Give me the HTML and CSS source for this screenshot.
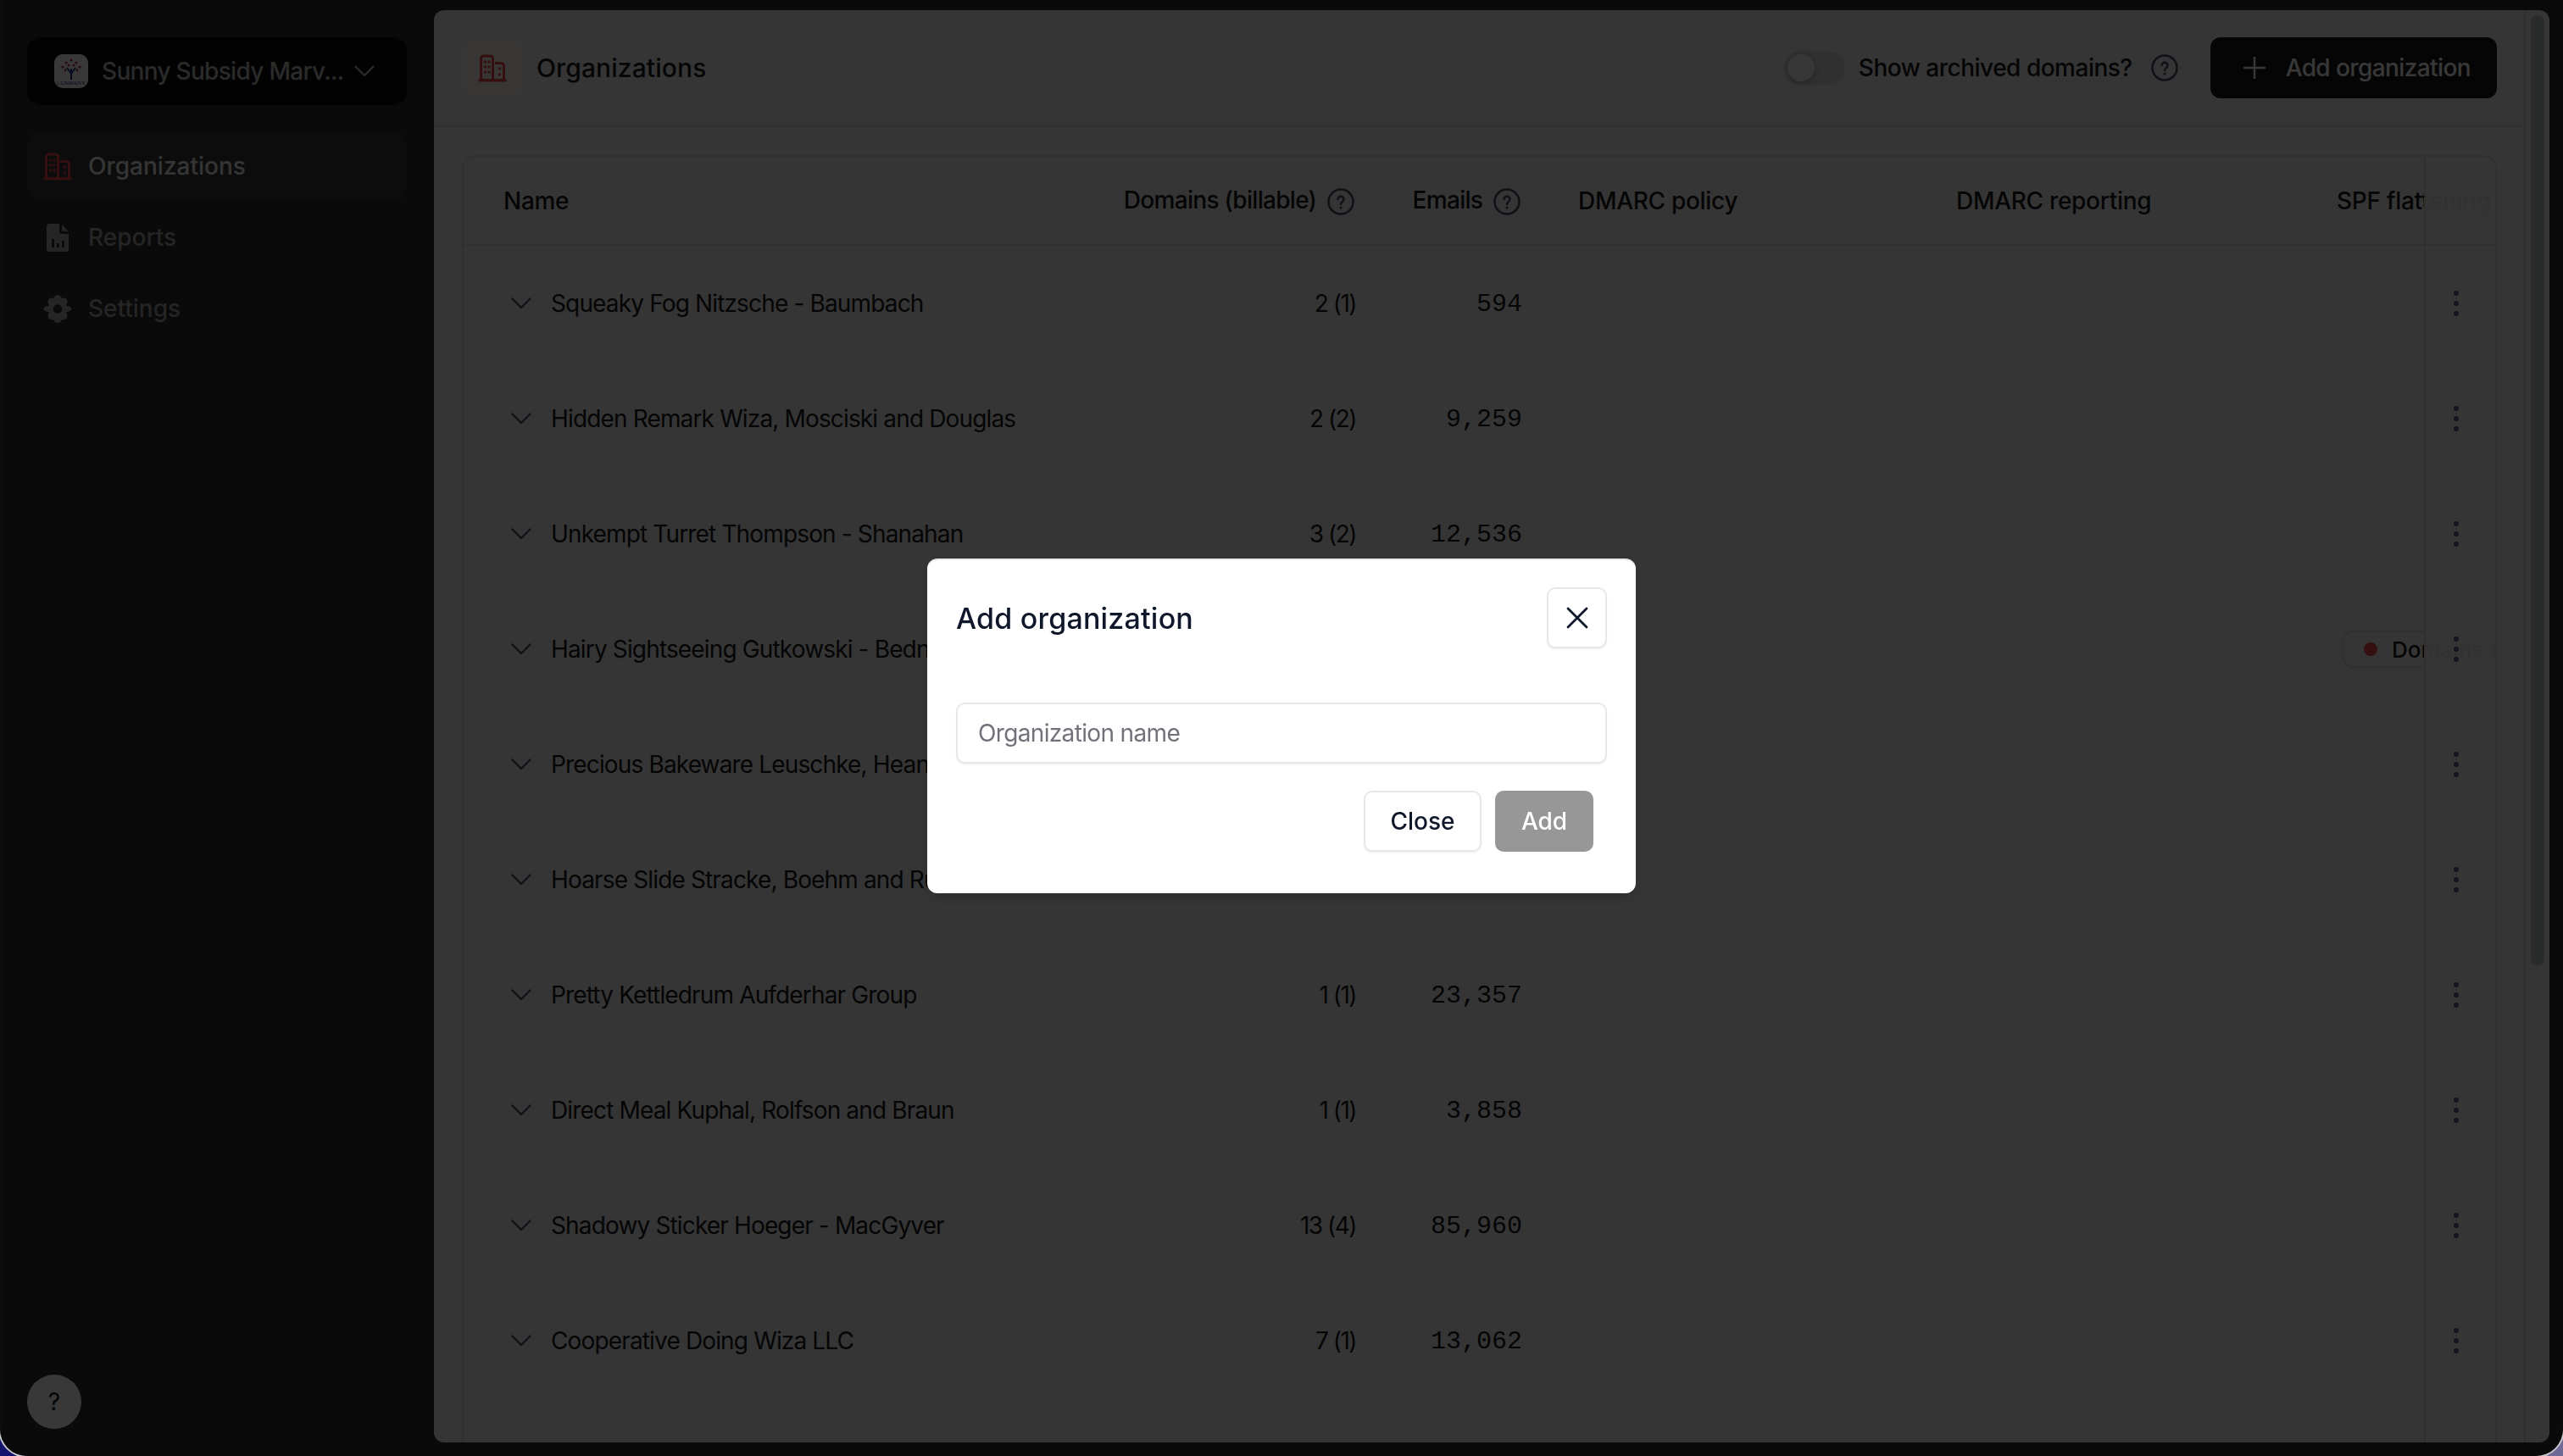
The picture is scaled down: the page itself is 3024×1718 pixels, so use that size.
FILE: index.html
```html
<!DOCTYPE html>
<html lang="en">
<head>
    <meta charset="UTF-8">
    <title>Organizations</title>
    <link rel="stylesheet" href="styles.css">
</head>
<body>
    <svg class="icon-defs" width="0" height="0">
        <symbol id="building" viewBox="0 0 34 32">
            <g fill="none" stroke="currentColor" stroke-width="3">
                <path d="M3.500 30V4.500a3 3 0 0 1 3-3h8a3 3 0 0 1 3 3V30"/>
                <path d="M20 10h7.500a3 3 0 0 1 3 3v17"/>
            </g>
            <path d="M2 30.300h30" stroke="currentColor" stroke-width="3.400" stroke-linecap="round"/>
            <g fill="currentColor">
                <rect x="7" y="7" width="3" height="3"/>
                <rect x="11.500" y="7" width="3" height="3"/>
                <rect x="7" y="13" width="3" height="3"/>
                <rect x="11.500" y="13" width="3" height="3"/>
                <rect x="7" y="19" width="3" height="3"/>
                <rect x="11.500" y="19" width="3" height="3"/>
                <rect x="24" y="15" width="3" height="3"/>
                <rect x="24" y="22" width="3" height="3"/>
            </g>
        </symbol>
        <symbol id="help" viewBox="0 0 32 32">
            <circle cx="16" cy="16" r="14.500" fill="none" stroke="currentColor" stroke-width="2.500"/>
            <path d="M12.500 13a3.500 3.500 0 1 1 5.500 3c-1.300.9-2 1.600-2 3" fill="none" stroke="currentColor" stroke-width="2.500" stroke-linecap="round"/>
            <circle cx="16" cy="23" r="1.500" fill="currentColor"/>
        </symbol>
        <symbol id="chevron" viewBox="0 0 24 14">
            <path d="M1.500 1.500 12 12 22.500 1.500" fill="none" stroke="currentColor" stroke-width="2.400" stroke-linecap="round" stroke-linejoin="round"/>
        </symbol>
        <symbol id="dots" viewBox="0 0 6 30">
            <circle cx="3" cy="3" r="3" fill="currentColor"/>
            <circle cx="3" cy="15" r="3" fill="currentColor"/>
            <circle cx="3" cy="27" r="3" fill="currentColor"/>
        </symbol>
    </svg>

    <div class="app">
        <aside class="sidebar">
            <button class="switcher">
                <span class="switcher-logo">
                    <svg width="40" height="40" viewBox="0 0 40 40">
                        <path d="M20 30V17M20 23l-5-7M20 23l5-7" stroke="#1f3a80" stroke-width="2" fill="none"/>
                        <g fill="#b3283a">
                            <circle cx="14" cy="10" r="1.600"/>
                            <circle cx="20" cy="7" r="1.600"/>
                            <circle cx="26" cy="10" r="1.600"/>
                            <circle cx="10" cy="15" r="1.600"/>
                            <circle cx="30" cy="15" r="1.600"/>
                            <circle cx="17" cy="13" r="1.400"/>
                            <circle cx="23" cy="13" r="1.400"/>
                            <circle cx="13" cy="19" r="1.400"/>
                            <circle cx="27" cy="19" r="1.400"/>
                        </g>
                        <text class="logo-text" x="20" y="36" text-anchor="middle">COMPANY</text>
                    </svg>
                </span>
                <span class="switcher-name">Sunny Subsidy Marv...</span>
                <svg class="switcher-chevron"><use href="#chevron"/></svg>
            </button>
            <nav class="nav">
                <a class="nav-item active">
                    <svg class="nav-icon red"><use href="#building"/></svg>
                    Organizations
                </a>
                <a class="nav-item">
                    <svg class="nav-icon" viewBox="-4 0 34 33">
                        <path fill="currentColor" fill-rule="evenodd" d="M4 0h11v9a3 3 0 0 0 3 3h8v18a3 3 0 0 1-3 3H3a3 3 0 0 1-3-3V4a4 4 0 0 1 4-4zM6 18h3v10H6zM12 23h3v5h-3zM18 20h3v8h-3z"/>
                        <path fill="currentColor" d="M18 1l8 8h-8z"/>
                    </svg>
                    Reports
                </a>
                <a class="nav-item">
                    <svg class="nav-icon" viewBox="0 0 34 34">
                        <path fill="currentColor" fill-rule="evenodd" d="M17 0c2.500 0 4.300 1.700 5 4.200 2.500-.8 5-.3 6.300 2 1.200 2.100.5 4.400-1.300 6.300 1.800.9 7 1.900 7 4.500s-5.200 3.600-7 4.500c1.800 1.900 2.500 4.200 1.300 6.300-1.300 2.300-3.800 2.800-6.300 2-.7 2.500-2.500 4.200-5 4.200s-4.300-1.700-5-4.200c-2.500.8-5 .3-6.300-2-1.200-2.100-.5-4.400 1.300-6.300C5.200 20.600 0 19.600 0 17s5.200-3.600 7-4.500C5.200 10.600 4.500 8.300 5.700 6.200c1.300-2.300 3.800-2.800 6.300-2C12.700 1.700 14.500 0 17 0zm0 11.500a5.500 5.500 0 1 0 0 11 5.500 5.500 0 0 0 0-11z"/>
                    </svg>
                    Settings
                </a>
            </nav>
            <button class="help-btn">?</button>
        </aside>

        <main class="main">
            <div class="content">
                <header class="page-header">
                    <span class="page-icon"><svg class="nav-icon red"><use href="#building"/></svg></span>
                    <h1>Organizations</h1>
                    <div class="header-actions">
                        <span class="toggle"><span class="toggle-knob"></span></span>
                        <span class="toggle-label">Show archived domains?</span>
                        <svg class="help-icon"><use href="#help"/></svg>
                        <button class="btn-primary">
                            <svg width="28" height="28" viewBox="0 0 28 28"><path d="M14 1v26M1 14h26" stroke="currentColor" stroke-width="2.400"/></svg>
                            Add organization
                        </button>
                    </div>
                </header>

                <div class="table-card">
                    <table class="org-table">
                        <thead>
                            <tr>
                                <th class="col-name">Name</th>
                                <th class="col-domains col-num">Domains (billable) <svg class="help-icon"><use href="#help"/></svg></th>
                                <th class="col-emails col-num">Emails <svg class="help-icon"><use href="#help"/></svg></th>
                                <th class="col-policy">DMARC policy</th>
                                <th class="col-report">DMARC reporting</th>
                                <th class="col-spf">SPF flattening</th>
                                <th class="col-menu sticky"></th>
                            </tr>
                        </thead>
                        <tbody id="rows"></tbody>
                    </table>
                </div>
            </div>
            <div class="scroll-track"><div class="scroll-thumb"></div></div>
        </main>
    </div>

    <div class="backdrop">
        <div class="modal">
            <div class="modal-head">
                <h2>Add organization</h2>
                <button class="modal-x">
                    <svg width="26" height="26" viewBox="0 0 26 26"><path d="M2 2l22 22M24 2 2 24" stroke="currentColor" stroke-width="2.800" stroke-linecap="round"/></svg>
                </button>
            </div>
            <input class="modal-input" type="text" placeholder="Organization name">
            <div class="modal-actions">
                <button class="btn-close">Close</button>
                <button class="btn-add">Add</button>
            </div>
        </div>
    </div>

    <script src="app.js"></script>
</body>
</html>
```

FILE: styles.css
```css
* {
    box-sizing: border-box;
}

body {
    margin: 0;
    height: 1718px;
    overflow: hidden;
    font-family: Inter, "Noto Sans", sans-serif;
    font-size: 28px;
    color: #18181b;
    background: linear-gradient(90deg, #14146e, #6f6a96);
}

button {
    font: inherit;
    cursor: pointer;
}

.icon-defs {
    position: absolute;
}

.app {
    display: flex;
    height: 1718px;
    background-color: #2d2d2d;
    border-radius: 0 0 32px 32px;
    border-left: 2px solid #3a3a3a;
    padding: 12px 16px 16px 0;
}

/* sidebar */
.sidebar {
    width: 510px;
    flex-shrink: 0;
    display: flex;
    flex-direction: column;
    padding: 32px 32px 16px 30px;
}

.switcher {
    display: flex;
    align-items: center;
    height: 80px;
    padding: 0 32px;
    border: none;
    border-radius: 16px;
    background-color: #0a0a0a;
    color: #c0c0c0;
    font-weight: 500;
}

.switcher-logo {
    width: 40px;
    height: 40px;
    flex-shrink: 0;
    border-radius: 10px;
    background-color: #fff;
    overflow: hidden;
}

.logo-text {
    font-family: "Liberation Serif", serif;
    font-size: 7px;
    fill: #1f3a80;
}

.switcher-name {
    margin-left: 16px;
    letter-spacing: -0.7px;
    white-space: nowrap;
}

.switcher-chevron {
    width: 24px;
    height: 14px;
    flex-shrink: 0;
    margin-left: 12px;
}

.nav {
    display: flex;
    flex-direction: column;
    gap: 4px;
    margin-top: 32px;
}

.nav-item {
    display: flex;
    align-items: center;
    gap: 19px;
    height: 80px;
    padding: 0 19px;
    border-radius: 16px;
    color: #a8a8a8;
    font-weight: 500;
}

.nav-item.active {
    background-color: #3a3a3a;
    color: #f0f0f0;
}

.nav-icon {
    width: 34px;
    height: 33px;
    flex-shrink: 0;
}

.red {
    color: #ef4444;
}

.help-btn {
    width: 64px;
    height: 64px;
    margin-top: auto;
    border: none;
    border-radius: 50%;
    background-color: #fff;
    color: #18181b;
    font-size: 28px;
}

/* main panel */
.main {
    flex: 1;
    display: flex;
    min-width: 0;
    background-color: #f0f0f0;
    border-radius: 12px;
    overflow: hidden;
}

.content {
    flex: 1;
    min-width: 0;
    display: flex;
    flex-direction: column;
}

.page-header {
    display: flex;
    align-items: center;
    height: 138px;
    flex-shrink: 0;
    padding: 0 32px 0 33px;
    border-bottom: 2px solid #dadada;
}

.page-icon {
    width: 72px;
    height: 72px;
    display: flex;
    align-items: center;
    justify-content: center;
    border-radius: 16px;
    background-color: #fff0f0;
}

h1 {
    margin: 0 0 0 16px;
    font-size: 30px;
    font-weight: 500;
    letter-spacing: 0.1px;
}

.header-actions {
    display: flex;
    align-items: center;
    margin-left: auto;
}

.toggle {
    width: 72px;
    height: 40px;
    padding: 4px;
    border-radius: 20px;
    background-color: #d9d9d9;
}

.toggle-knob {
    display: block;
    width: 32px;
    height: 32px;
    border-radius: 50%;
    background-color: #f8f8f8;
    box-shadow: 0 3px 8px rgba(0, 0, 0, 0.2);
}

.toggle-label {
    margin: 0 22px 0 16px;
    font-weight: 500;
    letter-spacing: -0.5px;
}

.help-icon {
    width: 32px;
    height: 32px;
    color: #4b4b6b;
    vertical-align: middle;
}

.btn-primary {
    display: flex;
    align-items: center;
    gap: 23px;
    height: 72px;
    margin-left: 38px;
    padding: 0 31px 0 38px;
    border: none;
    border-radius: 12px;
    background-color: #181818;
    color: #fff;
    font-weight: 500;
    letter-spacing: -0.6px;
    white-space: nowrap;
}

.table-card {
    flex: 1;
    min-height: 0;
    margin: 33px 32px 0 33px;
    border: 2px solid #dadada;
    border-bottom: none;
    border-radius: 16px 16px 0 0;
    overflow: hidden;
}

.org-table {
    table-layout: fixed;
    width: 2662px;
    border-collapse: separate;
    border-spacing: 0;
}

.org-table th {
    height: 105px;
    padding: 0 32px;
    border-bottom: 2px solid #dadada;
    text-align: left;
    font-weight: 500;
    letter-spacing: -0.3px;
    white-space: nowrap;
}

.org-table td {
    height: 136px;
    padding: 0 32px;
    white-space: nowrap;
}

.col-name { width: 700px; }
.col-domains { width: 385px; }
.col-emails { width: 196px; }
.col-policy { width: 448px; }
.col-report { width: 449px; }
.col-spf { width: 400px; }
.col-menu { width: 84px; }

.org-table th.col-name {
    padding-left: 47px;
}

.org-table td.cell-name {
    padding-left: 48px;
}

.org-table th.col-policy {
    padding-left: 34px;
}

.org-table .col-num {
    padding-right: 34px;
    text-align: right;
    letter-spacing: -0.7px;
}

.org-table .col-num .help-icon {
    margin-left: 6px;
}

.org-table .cell-num {
    text-align: right;
    letter-spacing: -1.5px;
}

.name-wrap {
    display: flex;
    align-items: center;
    letter-spacing: -0.85px;
}

.row-chevron {
    width: 24px;
    height: 14px;
    flex-shrink: 0;
    margin: 0 23px 0 8px;
    color: #4b4b6b;
}

.org-table .cell-mono {
    padding-top: 2px;
    font-family: "Liberation Mono", monospace;
    font-size: 30px;
    letter-spacing: 0;
}

.org-table .sticky {
    position: sticky;
    right: 0;
    padding: 0;
    border-left: 2px solid #dadada;
    background-color: rgba(240, 240, 240, 0.94);
}

.menu-dots {
    width: 6px;
    height: 30px;
    display: block;
    margin-left: 33px;
    color: #5b5b7f;
}

.badge {
    display: inline-flex;
    align-items: center;
    gap: 17px;
    height: 44px;
    margin-left: 6px;
    padding: 0 24px;
    border: 2px solid #dadada;
    border-radius: 14px;
    font-size: 26px;
    font-weight: 500;
}

.badge-dot {
    width: 16px;
    height: 16px;
    border-radius: 50%;
    background-color: #ef4444;
}

.scroll-track {
    width: 30px;
    flex-shrink: 0;
    padding: 6px 6px 0 6px;
    border-left: 2px solid #dadada;
}

.scroll-thumb {
    height: 1122px;
    border-radius: 8px;
    background-color: #bfc5c3;
}

/* modal */
.backdrop {
    position: fixed;
    inset: 0;
    display: flex;
    align-items: center;
    justify-content: center;
    padding-bottom: 5px;
    border-radius: 0 0 32px 32px;
    background-color: rgba(0, 0, 0, 0.78);
    box-shadow: 0 0 0 2px #c9c9c9;
}

.modal {
    width: 836px;
    height: 395px;
    padding: 32px 34px 0;
    border-radius: 12px;
    border-top: 2px solid #e5e7eb;
    background-color: #fff;
    color: #0f172a;
    box-shadow: 0 6px 16px rgba(0, 0, 0, 0.15);
}

.modal-head {
    display: flex;
    align-items: center;
    justify-content: space-between;
}

h2 {
    margin: 0;
    font-size: 34px;
    font-weight: 500;
    letter-spacing: 0.2px;
}

.modal-x {
    width: 71px;
    height: 72px;
    display: flex;
    align-items: center;
    justify-content: center;
    border: 2px solid #e5e7eb;
    border-radius: 10px;
    background-color: #fff;
    color: #0f172a;
    box-shadow: 0 2px 2px rgba(0, 0, 0, 0.05);
}

.modal-input {
    display: block;
    width: 100%;
    height: 72px;
    margin-top: 64px;
    padding: 0 24px;
    border: 2px solid #e5e7eb;
    border-radius: 10px;
    font: inherit;
    letter-spacing: -0.65px;
    box-shadow: 0 2px 2px rgba(0, 0, 0, 0.05);
}

.modal-input::placeholder {
    color: #71717a;
}

.modal-actions {
    display: flex;
    justify-content: flex-end;
    gap: 16px;
    margin-top: 32px;
    padding-right: 16px;
}

.btn-close,
.btn-add {
    height: 72px;
    border-radius: 10px;
    font-weight: 500;
}

.btn-close {
    width: 139px;
    border: 2px solid #e5e7eb;
    background-color: #fff;
    color: #0f172a;
    box-shadow: 0 2px 2px rgba(0, 0, 0, 0.05);
}

.btn-add {
    width: 116px;
    border: none;
    background-color: #979797;
    color: #fff;
}
```

FILE: app.js
```js
const orgs = [
    ["Squeaky Fog Nitzsche - Baumbach", "2 (1)", "594"],
    ["Hidden Remark Wiza, Mosciski and Douglas", "2 (2)", "9,259"],
    ["Unkempt Turret Thompson - Shanahan", "3 (2)", "12,536"],
    ["Hairy Sightseeing Gutkowski - Bednar", "4 (2)", "6,412", true],
    ["Precious Bakeware Leuschke, Heaney and Sons", "2 (1)", "1,087"],
    ["Hoarse Slide Stracke, Boehm and Runte", "5 (3)", "31,740"],
    ["Pretty Kettledrum Aufderhar Group", "1 (1)", "23,357"],
    ["Direct Meal Kuphal, Rolfson and Braun", "1 (1)", "3,858"],
    ["Shadowy Sticker Hoeger - MacGyver", "13 (4)", "85,960"],
    ["Cooperative Doing Wiza LLC", "7 (1)", "13,062"]
];

const rows = document.getElementById("rows");
let html = "";

for (const org of orgs) {
    let spf = "";
    if (org[3]) {
        spf = '<span class="badge"><span class="badge-dot"></span>Domains exceeded</span>';
    }
    html += "<tr>"
        + '<td class="cell-name"><div class="name-wrap"><svg class="row-chevron"><use href="#chevron"/></svg>' + org[0] + "</div></td>"
        + '<td class="cell-num">' + org[1] + "</td>"
        + '<td class="cell-num cell-mono">' + org[2] + "</td>"
        + "<td></td><td></td>"
        + "<td>" + spf + "</td>"
        + '<td class="sticky"><svg class="menu-dots"><use href="#dots"/></svg></td>'
        + "</tr>";
}

// one more row runs off the bottom of the panel
html += '<tr><td></td><td></td><td></td><td></td><td></td><td></td><td class="sticky"></td></tr>';
rows.innerHTML = html;
```
